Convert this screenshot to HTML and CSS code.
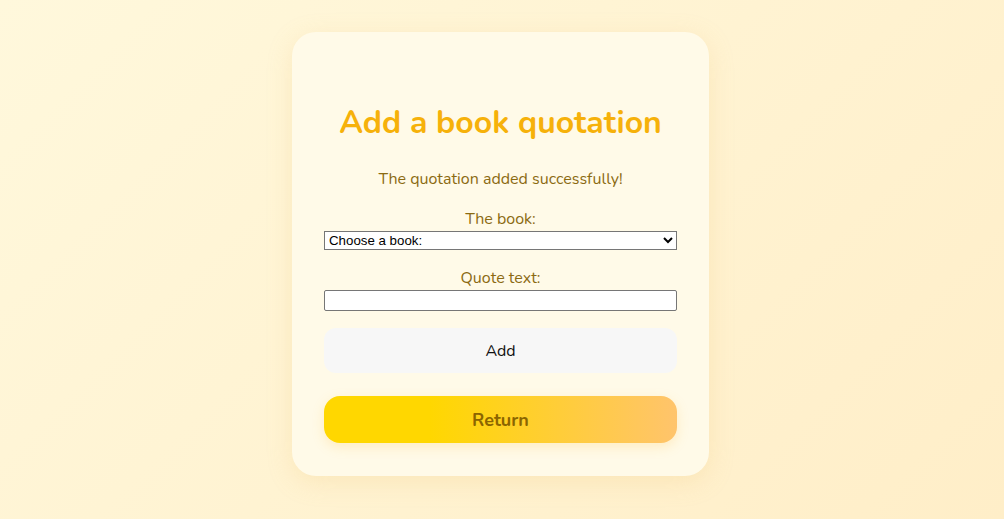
FILE: index.html
```html
<!DOCTYPE html>
<html>
<head>
<meta charset="utf-8">
<link rel="stylesheet" href="styles.css">
</head>
<body>
<div class="page">
  <div class="card">
    <h1 class="title">Add a book quotation</h1>
    <p class="msg">The quotation added successfully!</p>
    <form class="form">
      <label class="label" for="book">The book:</label>
      <select id="book" class="select"><option>Choose a book:</option></select>
      <label class="label label2" for="quote">Quote text:</label>
      <input id="quote" class="input" type="text">
      <button type="button" class="add">Add</button>
    </form>
    <button type="button" class="return">Return</button>
  </div>
</div>
</body>
</html>
```
FILE: styles.css
```css
html, body { margin: 0; height: 100%; }
body {
  background: linear-gradient(135deg, #fff8dc 0%, #ffeec8 100%);
  font-family: "Nunito", "Lato", "Open Sans", sans-serif;
}
.page {
  display: flex;
  justify-content: center;
  padding: 32px 3px 0 0;
}
.card {
  width: 353px;
  padding: 73px 32px 33px;
  background: #fffae8;
  border-radius: 24px;
  box-shadow: 0 6px 24px rgba(240, 200, 120, 0.25);
  display: flex;
  flex-direction: column;
}
.title {
  margin: 0;
  text-align: center;
  font-size: 32px;
  font-weight: 700;
  color: #f6b10a;
  line-height: 1.1;
}
.msg {
  margin: 28px 0 0;
  text-align: center;
  font-size: 16px;
  color: #8b6a12;
}
.form { display: flex; flex-direction: column; margin-top: 19px; }
.label {
  text-align: center;
  font-size: 16px;
  color: #8b6a12;
  line-height: 20px;
}
.label2 { margin-top: 18px; }
.select {
  margin: 2px 0 0;
  height: 19px;
  font-family: "Liberation Sans", Arial, sans-serif;
  font-size: 13.3px;
  background: #fff;
  border: 1px solid #767676;
  border-radius: 0;
  padding: 0;
  color: #000;
}
.input {
  margin: 2px 0 0;
  height: 21px;
  box-sizing: border-box;
  border: 1px solid #767676;
  border-radius: 2px;
  background: #fff;
}
.add {
  margin-top: 17px;
  height: 45px;
  border: none;
  border-radius: 12px;
  background: #f7f7f7;
  font-family: inherit;
  font-size: 16px;
  color: #111;
}
.return {
  margin-top: 23px;
  height: 47px;
  border: none;
  border-radius: 16px;
  background: linear-gradient(90deg, #ffd700 0%, #ffd700 30%, #ffc46c 100%);
  box-shadow: 0 4px 12px rgba(255, 200, 80, 0.25);
  font-family: inherit;
  font-size: 18px;
  font-weight: 700;
  color: #8b6500;
}
```
